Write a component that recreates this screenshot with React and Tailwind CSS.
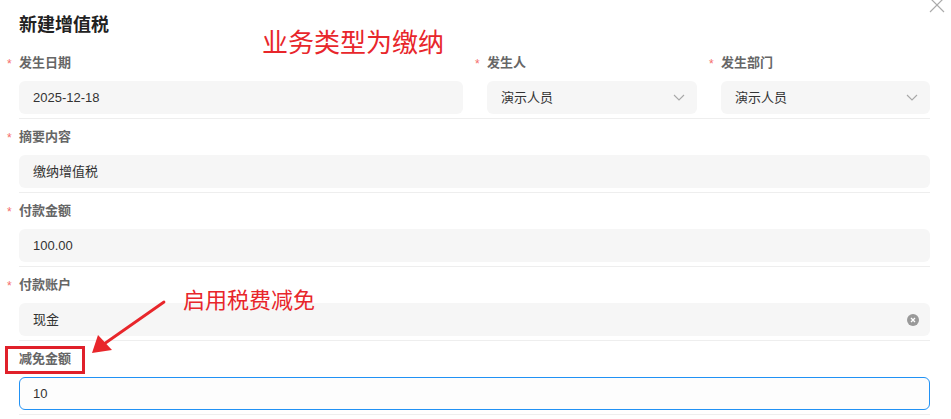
import React from 'react';

const font = { fontFamily: '"Liberation Sans", "Noto Sans CJK SC", sans-serif' };
const cjk = { fontFamily: '"Noto Sans CJK SC", sans-serif' };

const Chevron = () => (
    <svg width="12" height="7" viewBox="0 0 12 7" className="absolute right-[12px] top-[13px]">
        <path d="M1 1 L6 6 L11 1" fill="none" stroke="#a8a8a8" strokeWidth="1.1" />
    </svg>
);

const ClearIcon = () => (
    <svg width="12" height="12" viewBox="0 0 12 12" className="absolute right-[11px] top-[11px]">
        <circle cx="6" cy="6" r="6" fill="#999" />
        <path d="M4 4 L8 8 M8 4 L4 8" stroke="#fff" strokeWidth="1.3" />
    </svg>
);

// Campo de formulario: etiqueta + caja
const Field = ({ label, value, required = true, select, clear, focused, className = 'flex-1' }) => (
    <div className={'flex flex-col gap-[8px] ' + className}>
        <div className="relative h-[20px] leading-[20px] text-[13px] font-semibold text-[#666]">
            {required && (
                <span className="absolute -left-[12px] top-[1px] text-[12px] font-normal text-[#f56c6c]">*</span>
            )}
            {label}
        </div>
        <div
            className={
                'relative h-[33px] rounded-[6px] text-[13px] text-[#333] ' +
                (focused
                    ? 'border border-[#2192f5] bg-[#fdfdfd] pl-[13px] leading-[31px]'
                    : 'bg-[#f6f6f6] pl-[14px] leading-[33px]')
            }
        >
            {value}
            {select && <Chevron />}
            {clear && <ClearIcon />}
        </div>
    </div>
);

const Row = ({ children }) => (
    <div className="flex flex-col gap-[4px] pt-[8px]">
        <div className="flex gap-[24px]">{children}</div>
        <div className="h-px bg-[#eeeeee]" />
    </div>
);

export default function App() {
    return (
        <div className="relative w-[951px] h-[419px] overflow-hidden bg-white" style={font}>
            {/* cerrar */}
            <svg width="16" height="16" viewBox="0 0 16 16" className="absolute left-[929px] -top-[3px]">
                <path d="M1 1 L15 15 M15 1 L1 15" stroke="#ababab" strokeWidth="1.2" />
            </svg>

            <div className="flex flex-col pl-[19px] w-[930px]">
                <div className="pt-[13px] pb-[8px] text-[18px] leading-[24px] font-bold text-[#222]">新建增值税</div>

                <Row>
                    <Field label="发生日期" value="2025-12-18" />
                    <Field label="发生人" value="演示人员" select className="w-[210px]" />
                    <Field label="发生部门" value="演示人员" select className="w-[209px]" />
                </Row>
                <Row>
                    <Field label="摘要内容" value="缴纳增值税" />
                </Row>
                <Row>
                    <Field label="付款金额" value="100.00" />
                </Row>
                <Row>
                    <Field label="付款账户" value="现金" clear />
                </Row>
                <Row>
                    <Field label="减免金额" value="10" required={false} focused />
                </Row>
            </div>

            {/* anotaciones */}
            <div className="absolute left-[262px] top-[25px] text-[26px] leading-[32px] text-[#e8262b]" style={cjk}>
                业务类型为缴纳
            </div>
            <div className="absolute left-[183px] top-[284px] text-[22px] leading-[28px] text-[#e8262b]" style={cjk}>
                启用税费减免
            </div>
            <div className="absolute left-[5px] top-[346px] w-[80px] h-[28px] border-[3px] border-[#e0202a]" />
            <svg width="951" height="419" className="absolute left-0 top-0 pointer-events-none">
                <path d="M164 302 L104 344" stroke="#e8262b" strokeWidth="2.8" strokeLinecap="round" />
                <polygon points="92,353 98,335 112,350" fill="#e8262b" />
            </svg>
        </div>
    );
}
